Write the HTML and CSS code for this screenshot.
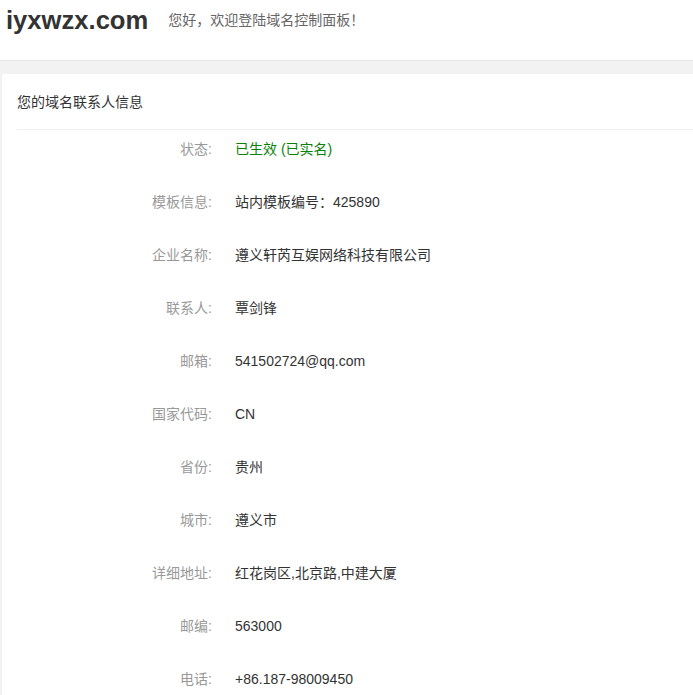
FILE: index.html
```html
<!DOCTYPE html>
<html lang="zh-CN">
<head>
<meta charset="utf-8">
<title>域名控制面板</title>
<link rel="stylesheet" href="styles.css">
</head>
<body>
<header class="top">
  <span class="logo">iyxwzx.com</span>
  <span class="welcome">您好，欢迎登陆域名控制面板！</span>
</header>
<main class="main">
  <section class="card">
    <div class="card-title">您的域名联系人信息</div>
    <dl class="info">
      <div class="row"><dt>状态:</dt><dd class="ok">已生效 (已实名)</dd></div>
      <div class="row"><dt>模板信息:</dt><dd>站内模板编号：425890</dd></div>
      <div class="row"><dt>企业名称:</dt><dd>遵义轩芮互娱网络科技有限公司</dd></div>
      <div class="row"><dt>联系人:</dt><dd>覃剑锋</dd></div>
      <div class="row"><dt>邮箱:</dt><dd>541502724@qq.com</dd></div>
      <div class="row"><dt>国家代码:</dt><dd>CN</dd></div>
      <div class="row"><dt>省份:</dt><dd>贵州</dd></div>
      <div class="row"><dt>城市:</dt><dd>遵义市</dd></div>
      <div class="row"><dt>详细地址:</dt><dd>红花岗区,北京路,中建大厦</dd></div>
      <div class="row"><dt>邮编:</dt><dd>563000</dd></div>
      <div class="row"><dt>电话:</dt><dd>+86.187-98009450</dd></div>
    </dl>
  </section>
</main>
</body>
</html>
```
FILE: styles.css
```css
* { box-sizing: border-box; }
html, body { margin: 0; padding: 0; }
body {
  background: #f2f2f2;
  font-family: "Liberation Sans", "Noto Sans CJK SC", sans-serif;
  font-size: 14px;
  color: #333;
}
.top {
  height: 61px;
  background: #fff;
  border-bottom: 1px solid #e6e6e6;
  display: flex;
  align-items: flex-start;
  padding: 4px 0 0 6px;
}
.logo {
  font-size: 25.6px;
  font-weight: bold;
  color: #333;
  line-height: 32px;
}
.welcome {
  margin-left: 20px;
  margin-top: 6px;
  font-size: 14px;
  color: #666;
  line-height: 20px;
}
.main {
  padding: 13px 0 0 2px;
}
.card {
  background: #fff;
}
.card-title {
  margin-left: 15px;
  height: 56px;
  line-height: 56px;
  border-bottom: 1px solid #eef0f5;
  font-size: 14px;
  color: #333;
}
.info {
  margin: 0;
  padding: 9px 0 7px;
}
.row {
  display: flex;
  line-height: 20px;
  margin-bottom: 33px;
}
.row:last-child { margin-bottom: 0; }
.row dt {
  width: 210px;
  text-align: right;
  color: #999;
  font-size: 14px;
}
.row dd {
  margin: 0 0 0 23px;
  color: #333;
  font-size: 14px;
}
.row dd.ok { color: #0a820a; }
```
